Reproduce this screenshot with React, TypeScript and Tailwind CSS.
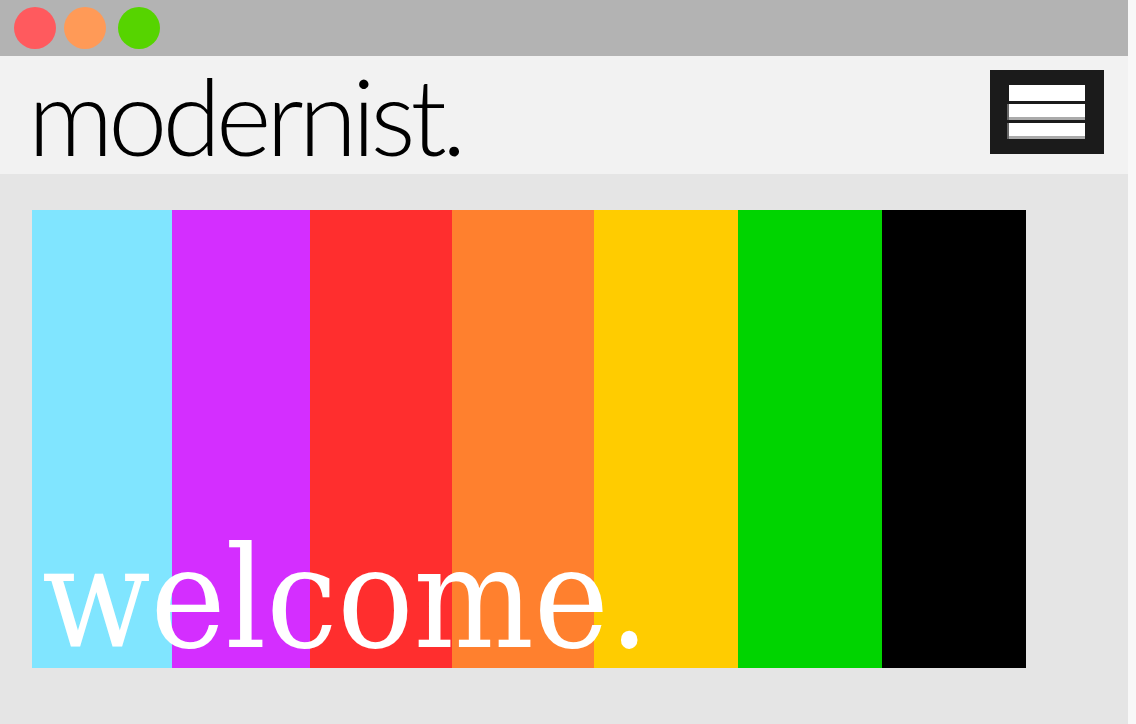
import React from "react";

const stripes = [
  { color: "bg-[#80e5ff]", w: "w-[140px]" },
  { color: "bg-[#d42eff]", w: "w-[138px]" },
  { color: "bg-[#ff2e2e]", w: "w-[142px]" },
  { color: "bg-[#ff802e]", w: "w-[142px]" },
  { color: "bg-[#ffcc00]", w: "w-[144px]" },
  { color: "bg-[#00d400]", w: "w-[144px]" },
  { color: "bg-[#000000]", w: "w-[144px]" },
];

function TitleBar() {
  return (
    <div className="h-[56px] bg-[#b3b3b3] flex items-center pl-[14px] gap-[8px]">
      <span className="w-[42px] h-[42px] rounded-full bg-[#ff5a5e]" />
      <span className="w-[42px] h-[42px] rounded-full bg-[#ff9a57]" />
      <span className="w-[42px] h-[42px] rounded-full bg-[#56d400] ml-[4px]" />
    </div>
  );
}

function Header() {
  return (
    <header className="h-[118px] bg-[#f2f2f2] flex items-center justify-between pl-[28px] pr-[24px]">
      <h1
        className="text-[106px] leading-none font-light text-black tracking-[-5px]"
        style={{ fontFamily: "Lato, 'Noto Sans', sans-serif" }}
      >
        modernist.
      </h1>
      <button className="w-[114px] h-[84px] bg-[#1b1b1b] flex flex-col items-center justify-center gap-[3px] -mt-[6px]">
        <span className="w-[76px] h-[16px] bg-white" />
        <span className="w-[78px] h-[16px] bg-white border-l-2 border-[#666] shadow-[inset_0_-3px_0_#aaaaaa] -ml-[2px]" />
        <span className="w-[78px] h-[16px] bg-white border-l-2 border-[#666] shadow-[inset_0_-3px_0_#aaaaaa] -ml-[2px]" />
      </button>
    </header>
  );
}

export default function App() {
  return (
    <div className="w-[1136px] h-[724px] bg-[#f8f8f8] overflow-hidden">
      <div className="w-[1128px] h-full flex flex-col">
        <TitleBar />
        <Header />
        <main className="flex-1 bg-[#e5e5e5] pt-[36px] pl-[32px]">
          <div className="relative flex h-[458px] w-fit">
            {stripes.map((s, i) => (
              <div key={i} className={`${s.color} ${s.w} h-full`} />
            ))}
            <span
              className="absolute left-[10px] bottom-[-1px] text-white text-[141px] leading-none"
              style={{ fontFamily: "'DejaVu Serif Condensed', 'DejaVu Serif', serif" }}
            >
              welcome.
            </span>
          </div>
        </main>
      </div>
    </div>
  );
}
